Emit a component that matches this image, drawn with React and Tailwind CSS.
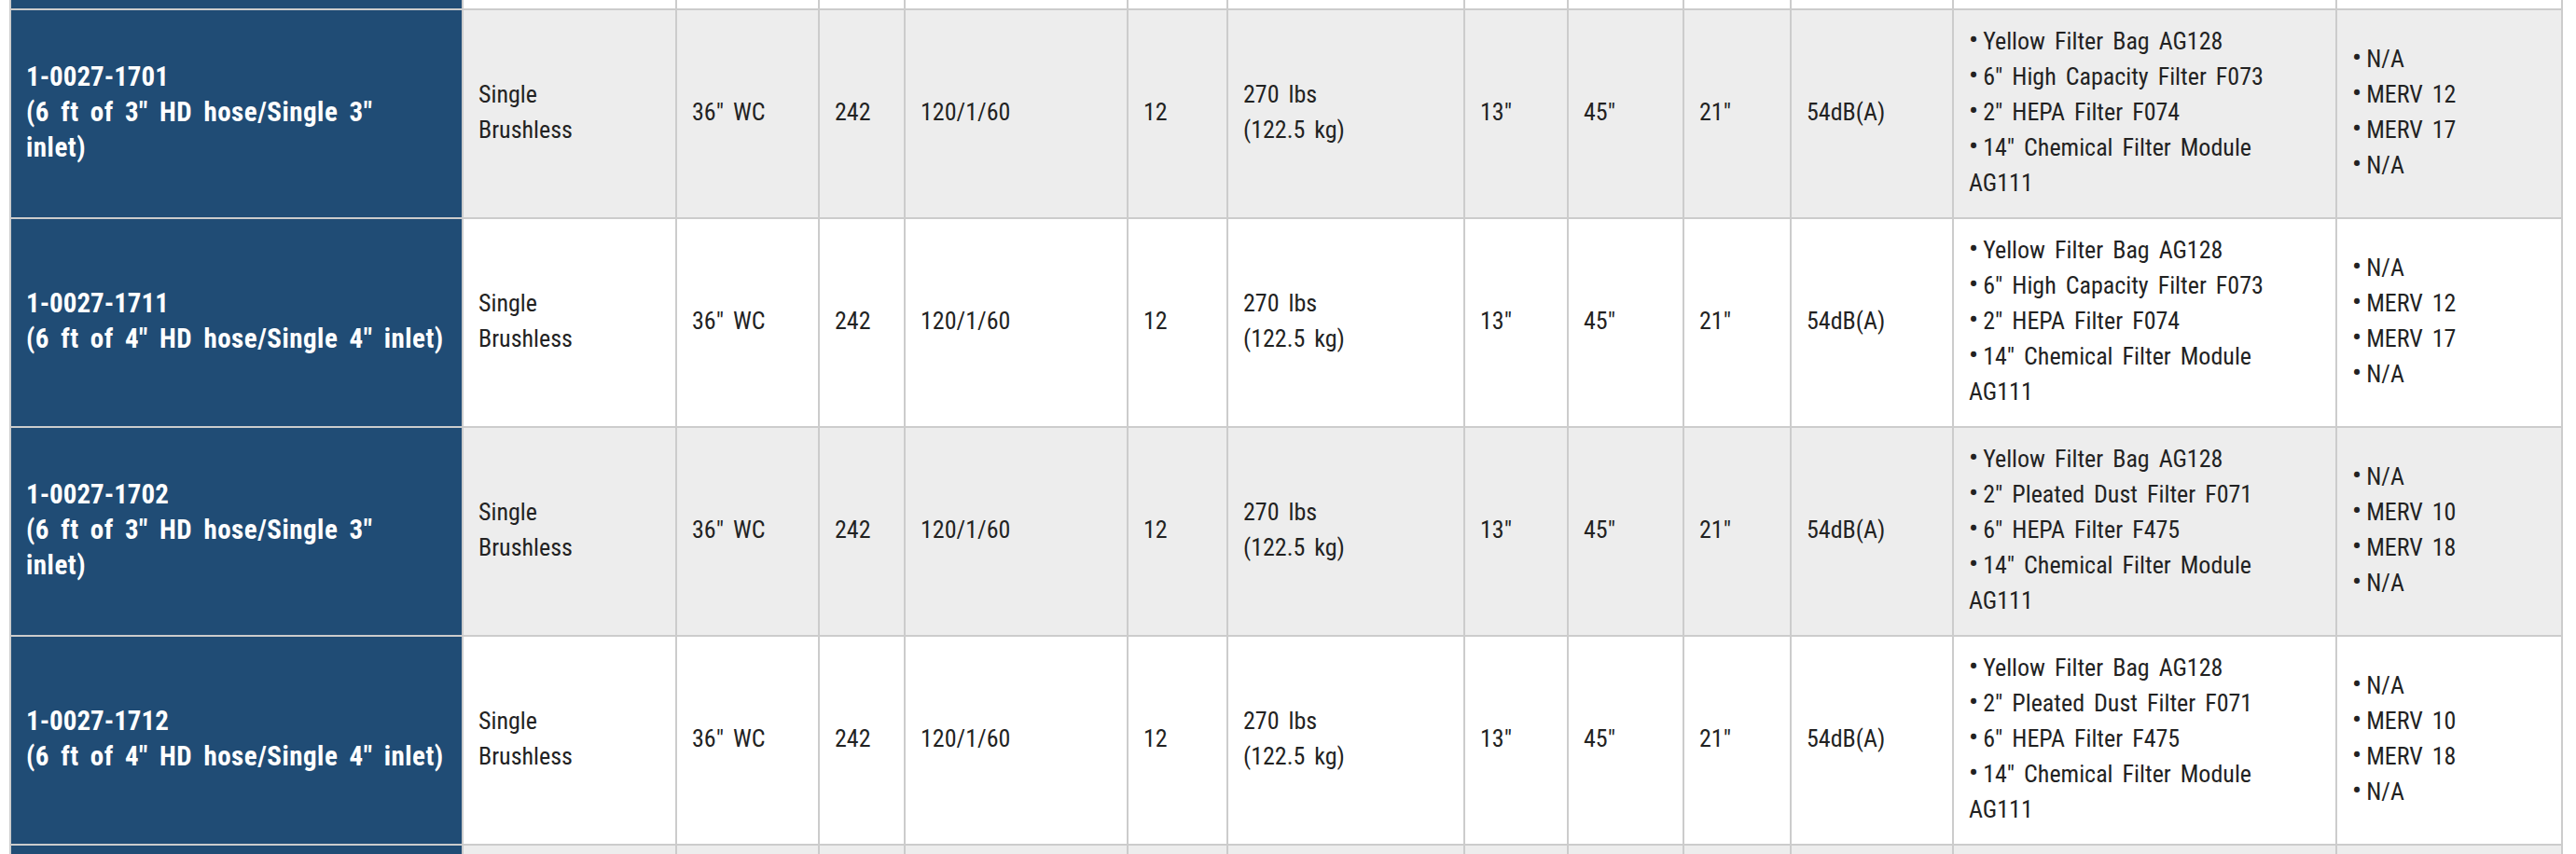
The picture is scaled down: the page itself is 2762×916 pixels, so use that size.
const FONT = { fontFamily: '"Roboto Condensed", "Roboto", sans-serif' };

const rows = [
  {
    id: "1-0027-1701",
    desc: ["(6 ft of 3\" HD hose/Single 3\"", "inlet)"],
    bg: "bg-[#ededed]",
    filters: ["Yellow Filter Bag AG128", "6\" High Capacity Filter F073", "2\" HEPA Filter F074"],
    merv: ["N/A", "MERV 12", "MERV 17", "N/A"],
  },
  {
    id: "1-0027-1711",
    desc: ["(6 ft of 4\" HD hose/Single 4\" inlet)"],
    bg: "bg-white",
    filters: ["Yellow Filter Bag AG128", "6\" High Capacity Filter F073", "2\" HEPA Filter F074"],
    merv: ["N/A", "MERV 12", "MERV 17", "N/A"],
  },
  {
    id: "1-0027-1702",
    desc: ["(6 ft of 3\" HD hose/Single 3\"", "inlet)"],
    bg: "bg-[#ededed]",
    filters: ["Yellow Filter Bag AG128", "2\" Pleated Dust Filter F071", "6\" HEPA Filter F475"],
    merv: ["N/A", "MERV 10", "MERV 18", "N/A"],
  },
  {
    id: "1-0027-1712",
    desc: ["(6 ft of 4\" HD hose/Single 4\" inlet)"],
    bg: "bg-white",
    filters: ["Yellow Filter Bag AG128", "2\" Pleated Dust Filter F071", "6\" HEPA Filter F475"],
    merv: ["N/A", "MERV 10", "MERV 18", "N/A"],
  },
];

function Cell({ bg, children }) {
  return (
    <div className={`${bg} flex items-center px-4 pb-1 text-[26px] leading-[38px] text-[#222222] whitespace-nowrap [word-spacing:4px]`}>
      <div>{children}</div>
    </div>
  );
}

function Bullet({ children }) {
  return (
    <div>
      <span className="text-[30px] leading-[0] mr-[5px]">•</span>
      {children}
    </div>
  );
}

function BlankRow({ bg }) {
  return (
    <>
      <div className="bg-[#204c75]" />
      {Array.from({ length: 12 }).map((_, i) => (
        <div key={i} className={bg} />
      ))}
    </>
  );
}

export default function App() {
  return (
    <div className="w-[2762px] h-[916px] overflow-hidden bg-white" style={FONT}>
      <div className="ml-[10px] w-[2738px] grid grid-cols-[483px_227px_151px_90px_237px_105px_252px_109px_122px_113px_172px_409px_240px] grid-rows-[9px_222px_222px_222px_222px_9px] gap-[2px] px-[2px] bg-[#cccccc]">
        <BlankRow bg="bg-white" />
        {rows.map((r) => (
          <div key={r.id} className="contents">
            <div className="bg-[#204c75] flex items-center px-4 pb-1 text-white font-bold text-[29px] leading-[38px] whitespace-nowrap">
              <div>
                <div>{r.id}</div>
                {r.desc.map((d, i) => (
                  <div key={i} className="tracking-[0.5px] [word-spacing:5px]">{d}</div>
                ))}
              </div>
            </div>
            <Cell bg={r.bg}>
              <div>Single</div>
              <div>Brushless</div>
            </Cell>
            <Cell bg={r.bg}>36" WC</Cell>
            <Cell bg={r.bg}>242</Cell>
            <Cell bg={r.bg}>120/1/60</Cell>
            <Cell bg={r.bg}>12</Cell>
            <Cell bg={r.bg}>
              <div>270 lbs</div>
              <div>(122.5 kg)</div>
            </Cell>
            <Cell bg={r.bg}>13"</Cell>
            <Cell bg={r.bg}>45"</Cell>
            <Cell bg={r.bg}>21"</Cell>
            <Cell bg={r.bg}>54dB(A)</Cell>
            <Cell bg={r.bg}>
              {r.filters.map((f, i) => (
                <Bullet key={i}>{f}</Bullet>
              ))}
              <Bullet>14" Chemical Filter Module</Bullet>
              <div>AG111</div>
            </Cell>
            <Cell bg={r.bg}>
              {r.merv.map((m, i) => (
                <Bullet key={i}>{m}</Bullet>
              ))}
            </Cell>
          </div>
        ))}
        <BlankRow bg="bg-[#ededed]" />
      </div>
    </div>
  );
}
